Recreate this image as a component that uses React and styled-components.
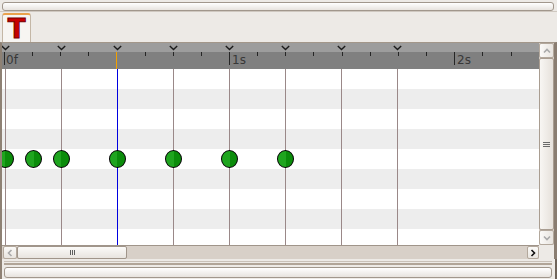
import React from "react";
import styled, { createGlobalStyle } from "styled-components";

const GlobalStyle = createGlobalStyle`
  html, body { margin: 0; padding: 0; background: #edeae6; }
  body { font-family: "DejaVu Sans", "Liberation Sans", sans-serif; }
`;

const Window = styled.div`
  width: 557px;
  height: 279px;
  box-sizing: border-box;
  display: flex;
  flex-direction: column;
  background: #edeae6;
  overflow: hidden;
`;

const TopStrip = styled.div`
  height: 12px;
  box-sizing: border-box;
  padding: 2px 3px 0 2px;
  border-bottom: 1px solid #cfc8c0;
`;

const Field = styled.div`
  height: ${(p) => p.$h || 9}px;
  box-sizing: border-box;
  border: 1px solid #a1978c;
  border-radius: 3px;
  background: linear-gradient(#ffffff, #e7e3de);
`;

const TabStrip = styled.div`
  height: 30px;
  box-sizing: border-box;
  padding: 1px 0 0 2px;
  display: flex;
  align-items: flex-end;
`;

const Tab = styled.div`
  width: 29px;
  height: 29px;
  box-sizing: border-box;
  border: 1px solid #c4b7a6;
  border-top: 2px solid #eaa24c;
  border-bottom: none;
  border-radius: 3px 3px 0 0;
  background: #f7f5f2;
  display: flex;
  align-items: center;
  justify-content: center;
`;

const TabGlyph = styled.span`
  font-family: "DejaVu Sans", sans-serif;
  font-weight: bold;
  font-size: 26px;
  line-height: 1;
  color: #c80000;
  -webkit-text-stroke: 1px #780000;
  margin-top: 1px;
`;

const Panel = styled.div`
  display: grid;
  grid-template-columns: 537px 15px;
  grid-template-rows: 202px 14px;
  border-top: 1px solid #a3978a;
  border-left: 2px solid #8e8174;
  border-right: 3px solid #8a7d71;
`;

const Canvas = styled.div`
  display: flex;
  flex-direction: column;
  overflow: hidden;
  background: #ffffff;
`;

const Ruler = styled.div`
  position: relative;
  height: 26px;
  display: flex;
  flex-direction: column;
  flex: none;
`;

const RulerTop = styled.div`
  height: 9px;
  background: #9d9d9d;
`;

const RulerBottom = styled.div`
  height: 17px;
  background: #808080;
`;

const Chevron = styled.svg`
  position: absolute;
  top: 1px;
  width: 9px;
  height: 7px;
`;

const Tick = styled.div`
  position: absolute;
  top: 9px;
  width: 1px;
  height: ${(p) => (p.$major ? 13 : 4)}px;
  background: #262626;
`;

const Label = styled.span`
  position: absolute;
  top: 10px;
  font-family: "DejaVu Sans", sans-serif;
  font-size: 12px;
  line-height: 14px;
  color: #383838;
`;

const RulerHead = styled.div`
  position: absolute;
  top: 9px;
  width: 1px;
  height: 17px;
  background: #f2a100;
`;

const Tracks = styled.div`
  position: relative;
  flex: 1;
  overflow: hidden;
`;

const Row = styled.div`
  height: 20px;
  background: ${(p) => (p.$alt ? "#ededed" : "#ffffff")};
`;

const GridLine = styled.div`
  position: absolute;
  top: 0;
  bottom: 0;
  width: 1px;
  background: ${(p) => (p.$head ? "#0000e0" : "#9a8888")};
`;

const Waypoint = styled.div`
  position: absolute;
  top: 81px;
  width: 17px;
  height: 18px;
  box-sizing: border-box;
  border-radius: 50%;
  border: 1px solid #000;
  background: linear-gradient(90deg, #1fa51f 0 50%, #0b8c0b 50% 100%);
`;

const VScroll = styled.div`
  display: flex;
  flex-direction: column;
  background: #d8d0c8;
`;

const ScrollBtn = styled.div`
  flex: none;
  width: ${(p) => (p.$w ? `${p.$w}px` : "auto")};
  height: ${(p) => (p.$h ? `${p.$h}px` : "auto")};
  box-sizing: border-box;
  border: 1px solid #b3a89c;
  border-radius: 2px;
  background: linear-gradient(${(p) => (p.$vertical ? "90deg" : "180deg")}, #fbfaf8, #e8e4df);
  display: flex;
  align-items: center;
  justify-content: center;
`;

const VThumb = styled.div`
  flex: 1;
  box-sizing: border-box;
  border: 1px solid #a99d91;
  border-radius: 2px;
  background: linear-gradient(90deg, #f8f6f3, #e6e1db);
  display: flex;
  flex-direction: column;
  align-items: center;
  justify-content: center;
  gap: 1px;
`;

const GripH = styled.div`
  width: 7px;
  height: 1px;
  background: #6a6a6a;
`;

const HScroll = styled.div`
  display: flex;
  padding-left: 1px;
  background: #d8d0c8;
  border-top: 1px solid #a0958a;
  box-sizing: border-box;
`;

const HThumb = styled.div`
  width: 110px;
  flex: none;
  box-sizing: border-box;
  border: 1px solid #a0958a;
  border-radius: 2px;
  background: linear-gradient(#fbfaf8, #e8e4df);
  display: flex;
  align-items: center;
  justify-content: center;
  gap: 1px;
`;

const GripV = styled.div`
  width: 1px;
  height: 5px;
  background: #5e5e5e;
`;

const Trough = styled.div`
  flex: 1;
`;

const Corner = styled.div`
  background: #edeae6;
`;

const Bottom = styled.div`
  flex: 1;
  display: flex;
  flex-direction: column;
  padding: 2px 3px 0 2px;
  border-right: 2px solid #6f645a;
  border-left: 2px solid #8e8174;
`;

const Rule = styled.div`
  height: ${(p) => p.$h}px;
  margin-bottom: ${(p) => p.$gap}px;
  background: ${(p) => p.$c};
`;

const Arrow = ({ dir, color }) => {
  const pts = {
    up: "1,4.5 4,1.5 7,4.5",
    down: "1,1.5 4,4.5 7,1.5",
    left: "4.5,1 1.5,4 4.5,7",
    right: "1.5,1 4.5,4 1.5,7",
  }[dir];
  const horiz = dir === "left" || dir === "right";
  return (
    <svg width={horiz ? 6 : 8} height={horiz ? 8 : 6} viewBox={horiz ? "0 0 6 8" : "0 0 8 6"}>
      <polyline points={pts} fill="none" stroke={color} strokeWidth="1.6" />
    </svg>
  );
};

const LINE0 = 3;
const LINE_STEP = 56;
const lines = Array.from({ length: 8 }, (_, i) => LINE0 + i * LINE_STEP);
const ticks = Array.from({ length: 19 }, (_, i) => ({
  x: Math.round(1.8 + i * 28.15),
  major: i % 8 === 0,
}));
const labels = [
  { x: 4, t: "0f" },
  { x: 230, t: "1s" },
  { x: 455, t: "2s" },
];
const dots = [3, 31, 59, 115, 171, 227, 283];
const HEAD = 115;

export default function App() {
  return (
    <>
      <GlobalStyle />
      <Window>
        <TopStrip>
          <Field />
        </TopStrip>
        <TabStrip>
          <Tab>
            <TabGlyph>T</TabGlyph>
          </Tab>
        </TabStrip>
        <Panel>
          <Canvas>
            <Ruler>
              <RulerTop />
              <RulerBottom />
              {lines.map((x) => (
                <Chevron key={`c${x}`} viewBox="0 0 9 7" style={{ left: x - 4 }}>
                  <polyline points="0.8,2 4.5,5.6 8.2,2" fill="none" stroke="#1c1c1c" strokeWidth="1.4" />
                </Chevron>
              ))}
              {ticks.map((t) => (
                <Tick key={`t${t.x}`} $major={t.major} style={{ left: t.x }} />
              ))}
              {labels.map((l) => (
                <Label key={l.t} style={{ left: l.x }}>
                  {l.t}
                </Label>
              ))}
              <RulerHead style={{ left: HEAD - 1 }} />
            </Ruler>
            <Tracks>
              {Array.from({ length: 9 }, (_, i) => (
                <Row key={i} $alt={i % 2 === 1} />
              ))}
              {lines.map((x) => (
                <GridLine key={`g${x}`} $head={x === HEAD} style={{ left: x }} />
              ))}
              {dots.map((x) => (
                <Waypoint key={`d${x}`} style={{ left: x - 8 }} />
              ))}
            </Tracks>
          </Canvas>
          <VScroll>
            <ScrollBtn $h={15} $vertical>
              <Arrow dir="up" color="#a9a9a9" />
            </ScrollBtn>
            <VThumb>
              <GripH />
              <GripH />
              <GripH />
            </VThumb>
            <ScrollBtn $h={15} $vertical>
              <Arrow dir="down" color="#a9a9a9" />
            </ScrollBtn>
          </VScroll>
          <HScroll>
            <ScrollBtn $w={14}>
              <Arrow dir="left" color="#a9a9a9" />
            </ScrollBtn>
            <HThumb>
              <GripV />
              <GripV />
              <GripV />
            </HThumb>
            <Trough />
            <ScrollBtn $w={12}>
              <Arrow dir="right" color="#111111" />
            </ScrollBtn>
          </HScroll>
          <Corner />
        </Panel>
        <Bottom>
          <Rule $h={1} $gap={1} $c="#c9c1b8" />
          <Rule $h={2} $gap={2} $c="#b1a598" />
          <Field $h={11} />
        </Bottom>
      </Window>
    </>
  );
}
